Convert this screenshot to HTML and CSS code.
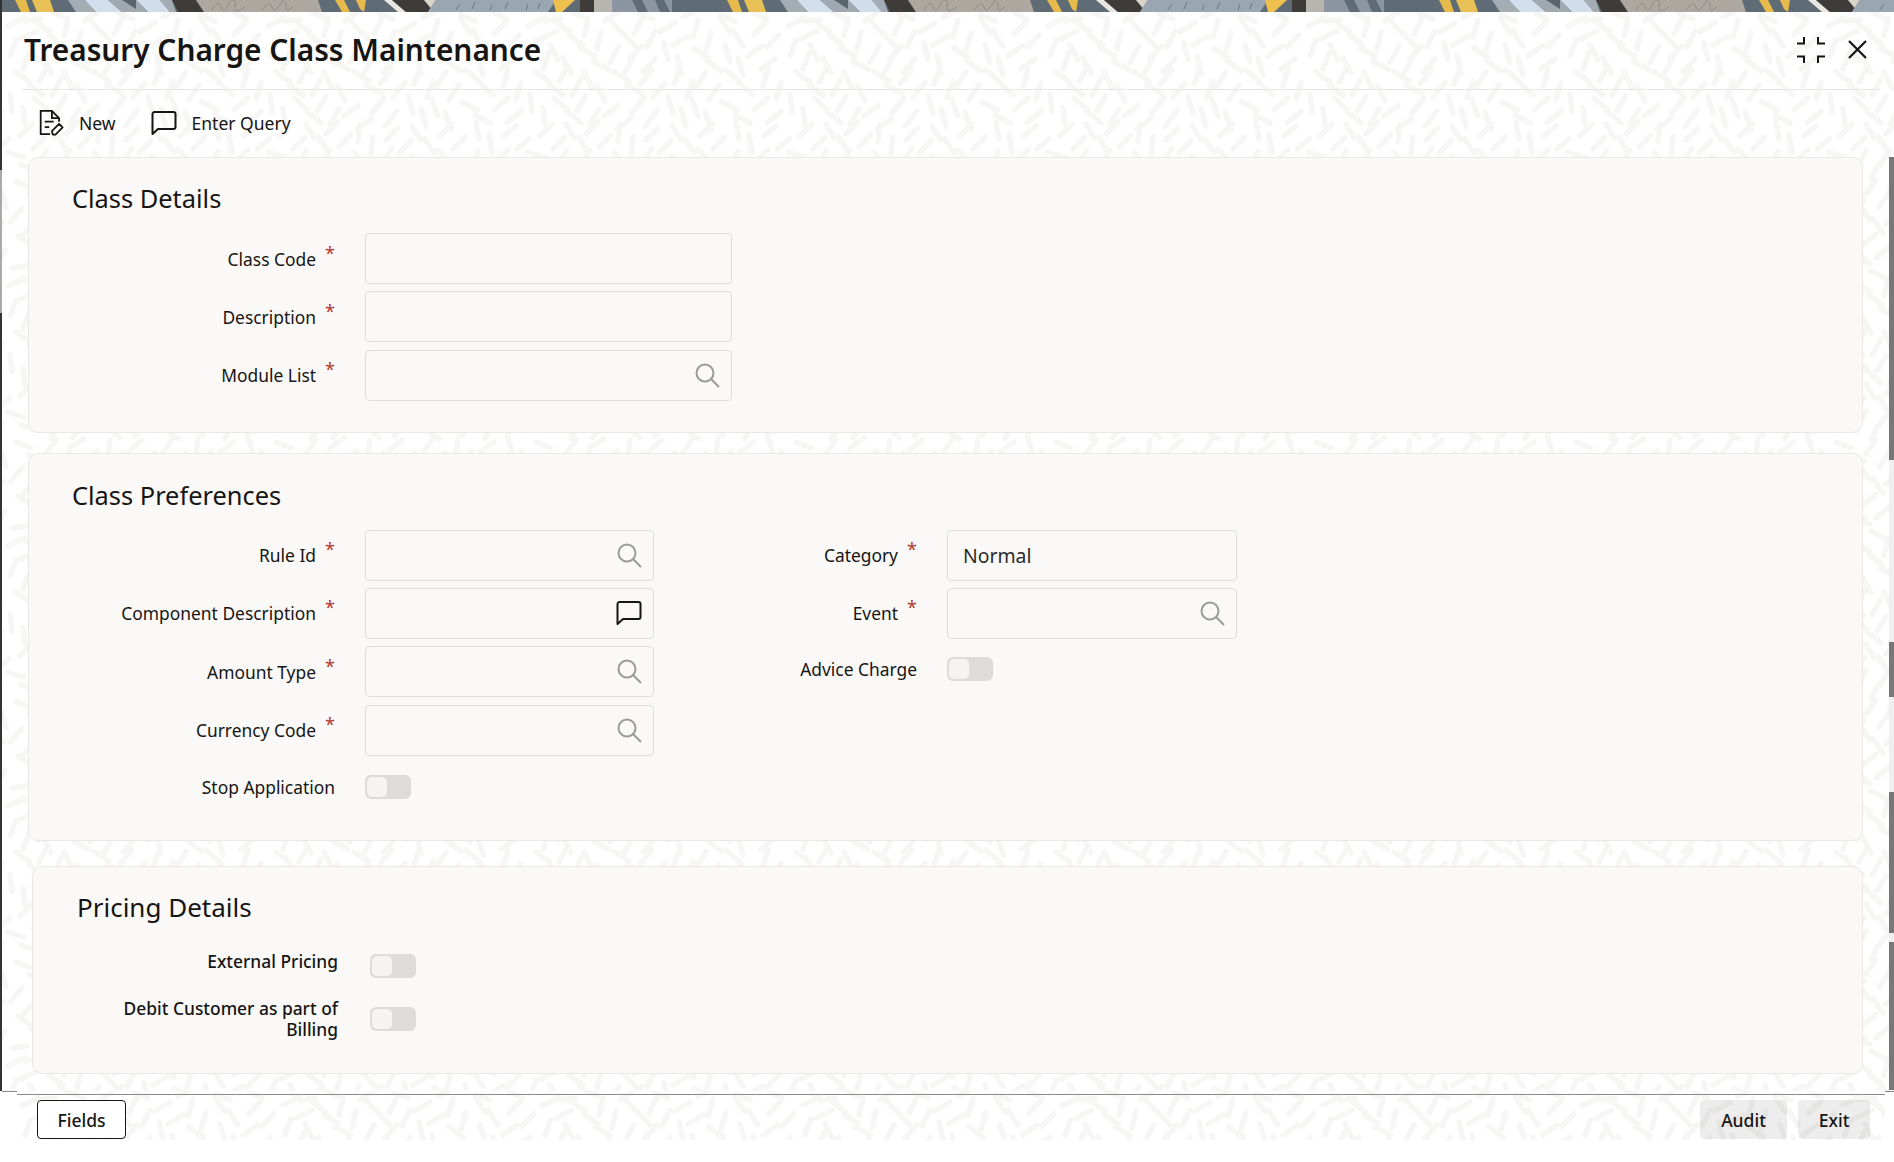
FILE: index.html
```html
<!DOCTYPE html>
<html lang="en">
<head>
<meta charset="utf-8">
<title>Treasury Charge Class Maintenance</title>
<link rel="stylesheet" href="styles.css">
</head>
<body>
<div class="window">
  <svg class="banner" aria-hidden="true">
    <defs>
      <pattern id="tile" width="712" height="12" patternUnits="userSpaceOnUse">
        <rect width="712" height="12" fill="#5f6c75"/>
        <polygon points="15,0 26,0 30,12 21,12" fill="#e6bb4c"/>
        <polygon points="32,0 50,0 54,12 37,12" fill="#e9c055"/>
        <polygon points="68,0 85,0 96,12 76,12" fill="#a5adb4"/>
        <polygon points="85,0 108,0 122,12 96,12" fill="#d3deec"/>
        <polygon points="108,0 136,0 136,12 122,12" fill="#a0a9b2"/>
        <polygon points="122,0 136,0 136,9" fill="#59656d"/>
        <polygon points="136,0 160,0 170,12 148,12" fill="#d2ddeb"/>
        <polygon points="136,0 148,12 136,12" fill="#a0a9b2"/>
        <polygon points="160,0 172,0 176,12 170,12" fill="#a3acb5"/>
        <polygon points="172,0 196,0 204,12 178,12" fill="#3e3b39"/>
        <polygon points="196,0 318,0 322,12 204,12" fill="#aca79f"/>
        <path d="M212 10c4-8 8-8 9-3s5 4 8-3 8-4 6 2 5 6 9 1M262 10c5-7 9-8 10-3s5 3 8-3 7-2 6 3 3 4 6 0" fill="none" stroke="#8e8b85"/>
        <polygon points="335,0 344,0 350,12 342,12" fill="#e6bb4c"/>
        <polygon points="356,0 366,0 364,12 360,9" fill="#e6bb4c"/>
        <polygon points="384,0 392,0 406,12 398,12" fill="#e8e6e0"/>
        <polygon points="392,0 424,0 434,12 406,12" fill="#3e3b39"/>
        <polygon points="424,0 436,0 428,12 434,12" fill="#d8d4ca"/>
        <polygon points="436,0 556,0 548,12 428,12" fill="#9ba6b3"/>
        <path d="M456 10l4-6M472 9l3-7M490 10l2-5M505 9l3-7M526 10l2-6M538 9l2-6" stroke="#6c7782" fill="none"/>
        <polygon points="553,0 575,0 562,12 556,12" fill="#eec04f"/>
        <rect x="580" width="14" height="12" fill="#3e3b39"/>
        <rect x="594" width="18" height="12" fill="#b8b5ae"/>
        <rect x="612" width="60" height="12" fill="#8b96a2"/>
        <polygon points="632,0 642,0 648,12 638,12" fill="#5f6c75"/>
        <polygon points="655,0 664,0 670,12 660,12" fill="#5f6c75"/>
      </pattern>
    </defs>
    <rect width="100%" height="12" fill="url(#tile)"/>
  </svg>

  <main class="dialog">
    <header class="dialog-head">
      <h1 class="dialog-title">Treasury Charge Class Maintenance</h1>
      <div class="dialog-actions">
        <svg class="icon-compress" viewBox="0 0 28 28" aria-hidden="true"><path d="M7 1v6.500H0M21 1v6.500H28M7 27v-6.500H0M21 27v-6.500H28" fill="none" stroke="#161513" stroke-width="2"/></svg>
        <svg class="icon-close" viewBox="0 0 19 19" aria-hidden="true"><path d="M1 1l17 17M18 1L1 18" fill="none" stroke="#161513" stroke-width="2.200"/></svg>
      </div>
    </header>

    <nav class="toolbar">
      <button class="tool tool-new" type="button">
        <svg class="tool-icon" viewBox="0 0 26 29" aria-hidden="true"><path d="M12 27H1.500V1H14l8 8v4M14 1v8h8M6 13h10M6 19h5" fill="none" stroke="#161513" stroke-width="2"/><path d="M15 27.500l-1-4 8-8 4 4-8 8z" fill="none" stroke="#161513" stroke-width="2" stroke-linejoin="round"/></svg>
        New
      </button>
      <button class="tool" type="button">
        <svg class="tool-icon" viewBox="0 0 26 24" aria-hidden="true"><path d="M1.500 23V3a2 2 0 0 1 2-2h19a2 2 0 0 1 2 2v13a2 2 0 0 1-2 2H7z" fill="none" stroke="#161513" stroke-width="2" stroke-linejoin="round"/></svg>
        Enter Query
      </button>
    </nav>

    <div class="cards">
      <section class="card">
        <h2 class="card-title">Class Details</h2>
        <div class="rows">
          <div class="row"><span class="label">Class Code<i class="star">*</i></span><span class="field field-wide"></span></div>
          <div class="row"><span class="label">Description<i class="star">*</i></span><span class="field field-wide"></span></div>
          <div class="row"><span class="label">Module List<i class="star">*</i></span><span class="field field-wide"><svg class="icon-search" viewBox="0 0 25 25" aria-hidden="true"><circle cx="10" cy="10" r="8.500" fill="none" stroke="#9b9a97" stroke-width="2"/><path d="M16 16l8 8" stroke="#9b9a97" stroke-width="2"/></svg></span></div>
        </div>
      </section>

      <section class="card card-prefs">
        <h2 class="card-title">Class Preferences</h2>
        <div class="columns">
          <div class="rows">
            <div class="row"><span class="label">Rule Id<i class="star">*</i></span><span class="field"><svg class="icon-search" viewBox="0 0 25 25" aria-hidden="true"><circle cx="10" cy="10" r="8.500" fill="none" stroke="#9b9a97" stroke-width="2"/><path d="M16 16l8 8" stroke="#9b9a97" stroke-width="2"/></svg></span></div>
            <div class="row"><span class="label">Component Description<i class="star">*</i></span><span class="field"><svg class="icon-chat" viewBox="0 0 26 24" aria-hidden="true"><path d="M1.500 23V3a2 2 0 0 1 2-2h19a2 2 0 0 1 2 2v13a2 2 0 0 1-2 2H7z" fill="none" stroke="#161513" stroke-width="2" stroke-linejoin="round"/></svg></span></div>
            <div class="row"><span class="label">Amount Type<i class="star">*</i></span><span class="field"><svg class="icon-search" viewBox="0 0 25 25" aria-hidden="true"><circle cx="10" cy="10" r="8.500" fill="none" stroke="#9b9a97" stroke-width="2"/><path d="M16 16l8 8" stroke="#9b9a97" stroke-width="2"/></svg></span></div>
            <div class="row"><span class="label">Currency Code<i class="star">*</i></span><span class="field"><svg class="icon-search" viewBox="0 0 25 25" aria-hidden="true"><circle cx="10" cy="10" r="8.500" fill="none" stroke="#9b9a97" stroke-width="2"/><path d="M16 16l8 8" stroke="#9b9a97" stroke-width="2"/></svg></span></div>
            <div class="row row-toggle row-stop"><span class="label">Stop Application</span><span class="toggle"><span class="knob"></span></span></div>
          </div>
          <div class="rows rows-second">
            <div class="row"><span class="label">Category<i class="star">*</i></span><span class="field field-value">Normal</span></div>
            <div class="row"><span class="label">Event<i class="star">*</i></span><span class="field"><svg class="icon-search" viewBox="0 0 25 25" aria-hidden="true"><circle cx="10" cy="10" r="8.500" fill="none" stroke="#9b9a97" stroke-width="2"/><path d="M16 16l8 8" stroke="#9b9a97" stroke-width="2"/></svg></span></div>
            <div class="row row-toggle"><span class="label">Advice Charge</span><span class="toggle"><span class="knob"></span></span></div>
          </div>
        </div>
      </section>

      <section class="card card-pricing">
        <h2 class="card-title">Pricing Details</h2>
        <div class="pricing-rows">
          <div class="row row-top"><span class="label">External Pricing</span><span class="toggle"><span class="knob"></span></span></div>
          <div class="row"><span class="label">Debit Customer as part of<br>Billing</span><span class="toggle"><span class="knob"></span></span></div>
        </div>
      </section>
    </div>
  </main>

  <footer class="footer">
    <div class="footer-bar">
      <button class="btn btn-outline" type="button">Fields</button>
      <div class="footer-right">
        <button class="btn btn-audit" type="button">Audit</button>
        <button class="btn btn-exit" type="button">Exit</button>
      </div>
    </div>
  </footer>

  <div class="edge-left" aria-hidden="true">
    <span class="seg seg-dark h170"></span><span class="seg seg-mid h143"></span><span class="seg seg-dark h778"></span>
  </div>
  <div class="scrollbar" aria-hidden="true">
    <span class="seg seg-gray h303"></span><span class="seg seg-light h182"></span><span class="seg seg-gray h55"></span><span class="seg seg-light h95"></span><span class="seg seg-gray h141"></span><span class="seg seg-light h9"></span><span class="seg seg-gray h148"></span>
  </div>
</div>
</body>
</html>
```

FILE: styles.css
```css
* { box-sizing: border-box; }
html, body { margin: 0; padding: 0; background: #fff; }
body { font-family: "Noto Sans", "Open Sans", sans-serif; color: #161513; overflow: hidden; }

.window { position: relative; width: 1894px; height: 1162px; display: flex; flex-direction: column; overflow: hidden; background: #fff; }
.banner { display: block; width: 100%; height: 12px; flex: none; }

.dialog, .footer {
  --tile: url("data:image/svg+xml,%3Csvg xmlns='http://www.w3.org/2000/svg' width='260' height='260'%3E%3Cpath fill='none' stroke='%23f6f6f5' stroke-width='5.500' stroke-linecap='round' d='M6 14l16-8M34 10l14 10M62 24l4-17M88 8l12 13M120 6l-8 16M138 20l15-9M176 8l-5 17M198 6l10 15M232 22l12-12M8 44l6-16M36 48l-8-15M58 36l15 8M88 50l9-16M120 34l-12 13M146 48l-4-17M172 36l14 10M208 50l-5-17M240 34l-14 10M14 60l14 10M46 54l-9 16M70 76l-8-16M92 60l15 9M130 58l-12 14M152 72l6-16M184 60l-10 15M204 58l14 12M246 58l-5 16M10 100l-2-17M32 86l14 12M64 84l-9 15M82 104l14-10M122 86l-12 15M146 84l5 17M176 104l-6-17M200 90l15 8M246 86l-14 12M18 124l12-12M44 112l8 14M76 110l-12 12M98 112l-2 17M124 128l12-12M150 114l9 14M190 112l-12 12M214 110l3 17M242 124l12-10M6 140l16 5M36 154l8-15M68 138l-10 15M92 140l12 13M130 136l-10 15M164 154l-14-10M176 138l12 12M210 154l6-15M246 138l-14 12M14 170l15 6M44 182l10-14M82 166l-14 10M108 168l-2 16M126 180l14-12M170 168l-10 14M196 166l-2 17M218 180l14-10M246 166l5 16M8 210l12-14M38 194l10 14M64 212l14-12M100 196l-12 12M126 196l5 16M162 212l-5-16M182 198l15 8M220 212l-5-16M248 196l-12 14M16 224l14 10M54 222l-13 11M70 240l5-16M100 222l-4 17M120 226l14 8M160 222l-10 14M188 238l-6-16M210 224l12 12M242 240l8-15M10 256l15-2M48 252l-12-6M84 246l-14 10M118 254l-14-6M148 252l12-6M200 256l-14-6M232 254l-12-6'/%3E%3C/svg%3E");
  background-color: #fff;
  background-image: var(--tile), var(--tile);
  background-position: 0 0, 13px 13px;
}

.dialog { flex: none; height: 1080px; margin-left: 2px; border-bottom: 1px solid #8a8a8a; display: flex; flex-direction: column; }

.dialog-head { flex: none; height: 78px; margin: 0 14px 0 20px; padding: 0 13px 2px 2px; border-bottom: 1px solid #e6e6e4; display: flex; align-items: center; justify-content: space-between; }
.dialog-title { margin: 0; font-size: 29.800px; font-weight: 600; line-height: 40px; }
.dialog-actions { display: flex; align-items: center; gap: 23px; }
.icon-compress { width: 28px; height: 28px; display: block; }
.icon-close { width: 19px; height: 19px; display: block; }

.toolbar { flex: none; height: 67px; padding: 0 0 2px 36px; display: flex; align-items: center; gap: 35px; }
.tool { border: 0; background: none; padding: 0; font: inherit; font-size: 17.500px; color: #161513; display: flex; align-items: center; gap: 15px; }
.tool-icon { width: 26px; height: 26px; display: block; }

.cards { flex: 1; min-height: 0; display: flex; flex-direction: column; gap: 20px; padding-left: 26px; width: 1861px; }
.card { background: #faf9f7; border: 1px solid #e9e8e6; border-radius: 10px; padding: 22px 0 31px 0; }
.card-title { margin: 0 0 17px 43px; font-size: 25.400px; font-weight: 400; line-height: 36px; }
.card-prefs { padding-top: 23px; padding-bottom: 41px; }
.card-pricing { margin-top: 5px; margin-left: 4px; padding-bottom: 30px; height: 208px; }
.card-pricing .card-title { margin-left: 44px; margin-bottom: 26px; font-size: 26px; }

.rows { display: flex; flex-direction: column; gap: 7.330px; }
.rows-second .label { width: 263px; }
.columns { display: flex; }
.pricing-rows { display: flex; flex-direction: column; gap: 20px; }

.row { display: flex; align-items: center; gap: 30px; }
.row-toggle { margin-top: 11px; }
.row-stop { margin-top: 12px; }
.row-top { align-items: flex-start; }
.row-top .toggle { margin-top: 3px; }

.label { width: 306px; flex: none; text-align: right; display: flex; justify-content: flex-end; align-items: flex-start; font-size: 17.400px; line-height: 22px; }
.pricing-rows .row { gap: 32px; }
.pricing-rows .label { display: block; width: 305px; font-weight: 500; line-height: 21.500px; }
.star { font-style: normal; color: #b03a2a; font-size: 18px; line-height: 14px; width: 19px; flex: none; text-align: right; margin-top: -2px; }

.field { width: 289px; height: 51px; flex: none; border: 1px solid #dfdedc; border-radius: 4px; background: #faf9f7; display: flex; align-items: center; justify-content: flex-end; padding-right: 11px; }
.rows-second .field { width: 290px; }
.field-wide { width: 367px; }
.field-value { justify-content: flex-start; padding-left: 15px; font-size: 19.400px; color: #2b2a28; }
.icon-search { width: 25px; height: 25px; display: block; }
.icon-chat { width: 26px; height: 24px; display: block; }

.toggle { width: 46px; height: 24px; flex: none; background: #dddcda; border-radius: 6px; padding: 2px; display: block; }
.knob { width: 20px; height: 20px; border-radius: 5px; background: #f6f4f2; display: block; }

.footer { flex: none; position: relative; margin: -1px 9px 0 17px; height: 49px; }
.footer-bar { margin-top: 3px; border-top: 1px solid #8a8a8a; padding: 5px 15px 1px 20px; display: flex; justify-content: space-between; }
.footer-right { display: flex; gap: 11px; }
.btn { height: 39px; font: inherit; font-size: 17.500px; font-weight: 500; color: #161513; border-radius: 4px; padding: 0; }
.btn-outline { width: 89px; border: 1px solid #161513; background: #fff; }
.btn-audit { width: 87px; border: 0; background: rgba(0, 0, 0, .07); }
.btn-exit { width: 72px; border: 0; background: rgba(0, 0, 0, .07); }

.edge-left { position: absolute; left: 0; top: 0; width: 2px; display: flex; flex-direction: column; }
.scrollbar { position: absolute; right: 0; top: 157px; width: 5px; display: flex; flex-direction: column; }
.seg { display: block; flex: none; }
.seg-dark { background: #333; }
.seg-mid { background: #aaa; }
.seg-gray { background: #777; }
.seg-light { background: #efefef; }
.h9 { height: 9px; } .h55 { height: 55px; } .h95 { height: 95px; } .h141 { height: 141px; } .h143 { height: 143px; } .h148 { height: 148px; } .h170 { height: 170px; } .h182 { height: 182px; } .h303 { height: 303px; } .h778 { height: 778px; }
```
